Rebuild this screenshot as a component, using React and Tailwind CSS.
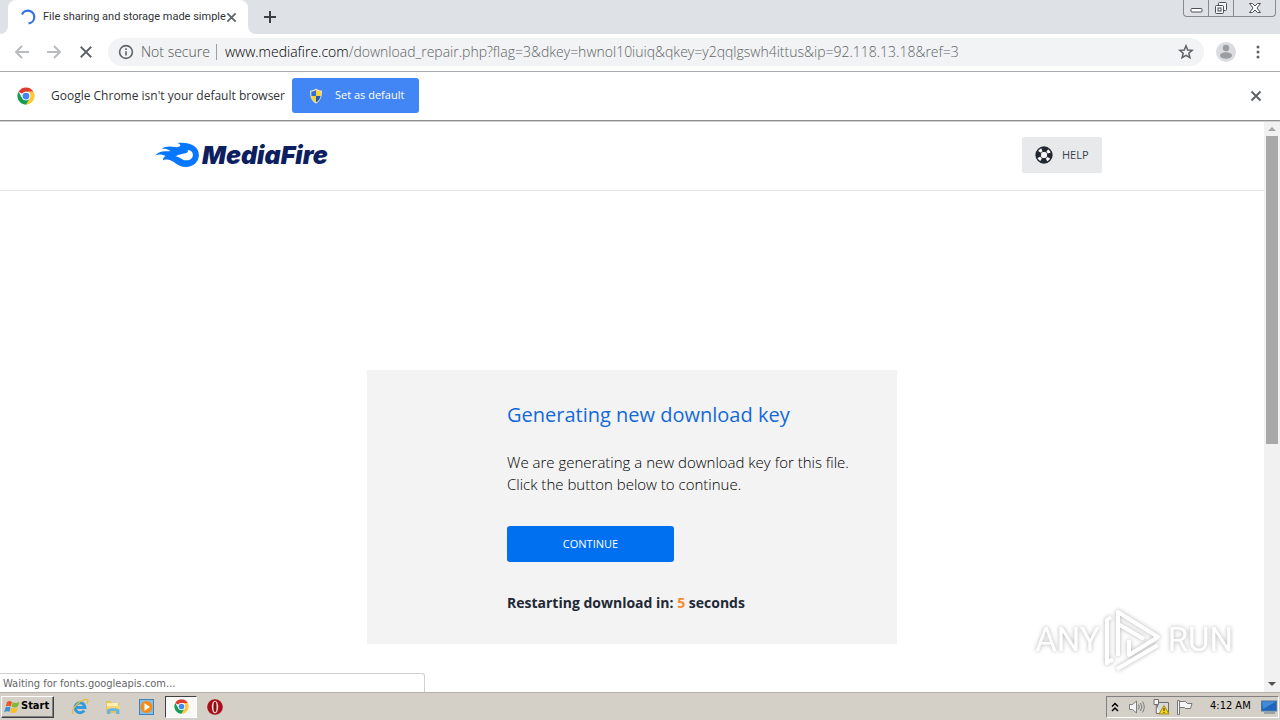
import React from "react";

function ChromeLogo({ className }) {
  return (
    <svg viewBox="0 0 48 48" className={className} aria-hidden="true">
      <circle cx="24" cy="24" r="23" fill="#fff" />
      <path d="M24 1 A23 23 0 0 1 43.9 12.5 H24 A11.5 11.5 0 0 0 14 18.3 L4.1 12.5 A23 23 0 0 1 24 1Z" fill="#dd3b2b" />
      <path d="M43.9 12.5 A23 23 0 0 1 24 47 L34 29.8 A11.5 11.5 0 0 0 34 18.2 L30 12.5Z" fill="#fcc934" />
      <path d="M4.1 12.5 A23 23 0 0 0 24 47 L34 29.8 A11.5 11.5 0 0 1 14 29.8Z" fill="#189b53" />
      <circle cx="24" cy="24" r="11.5" fill="#fff" />
      <circle cx="24" cy="24" r="9" fill="#4285f4" />
    </svg>
  );
}

function Cross({ className, width = 2 }) {
  return (
    <svg viewBox="0 0 12 12" className={className} fill="none" stroke="currentColor" strokeWidth={width} aria-hidden="true">
      <path d="M1.5 1.5 10.5 10.5 M10.5 1.5 1.5 10.5" />
    </svg>
  );
}

function TabStrip() {
  return (
    <div className="flex h-[34px] items-start bg-[#dee1e6]">
      <div className="flex h-full self-end">
        <span className="flex w-2 items-end bg-white">
          <span className="h-full w-full rounded-br-lg bg-[#dee1e6]" />
        </span>
        <div className="flex w-60 items-center rounded-t-lg bg-white pr-[10px] pl-3">
          <svg viewBox="0 0 16 16" className="h-4 w-4 shrink-0" fill="none" stroke="#3574e0" strokeWidth="2.200" aria-hidden="true">
            <path d="M2 5.500A6.400 6.400 0 1 1 8.500 14.400" />
          </svg>
          <span className="ml-[7px] flex-1 whitespace-nowrap font-['Roboto','Liberation_Sans',sans-serif] text-[11px] text-[#303336]">
            File sharing and storage made simple
          </span>
          <button type="button" aria-label="Close tab" className="mr-px text-[#5f6368]">
            <Cross className="h-[11px] w-[11px]" />
          </button>
        </div>
        <span className="flex w-2 items-end bg-white">
          <span className="h-full w-full rounded-bl-lg bg-[#dee1e6]" />
        </span>
      </div>
      <button type="button" aria-label="New tab" className="mt-[11px] ml-2 text-[#3c4043]">
        <svg viewBox="0 0 12 12" className="h-3 w-3" stroke="currentColor" strokeWidth="2" aria-hidden="true">
          <path d="M6 0V12M0 6H12" />
        </svg>
      </button>
      <div className="mr-1 ml-auto flex h-[17px] rounded-b-[4px] border border-t-0 border-[#858a93] text-[#4c5058]">
        <button type="button" aria-label="Minimize" className="flex w-[25px] items-center justify-center border-r border-[#858a93]">
          <svg viewBox="0 0 13 14" className="h-[14px] w-[13px]" fill="#fff" stroke="currentColor" aria-hidden="true">
            <rect x="1" y="7.500" width="11" height="3.500" rx="1" />
          </svg>
        </button>
        <button type="button" aria-label="Restore" className="flex w-[25px] items-center justify-center border-r border-[#858a93]">
          <svg viewBox="0 0 14 14" className="h-[14px] w-[14px]" fill="#f4f6f8" stroke="currentColor" aria-hidden="true">
            <rect x="4.500" y="1.500" width="8" height="8" rx="1" />
            <rect x="1.500" y="4.500" width="8" height="8" rx="1" />
            <rect x="4" y="7" width="3" height="3" />
          </svg>
        </button>
        <button type="button" aria-label="Close" className="flex w-[41px] items-center justify-center">
          <svg viewBox="0 0 14 12" className="h-3 w-[14px]" fill="#fff" stroke="currentColor" aria-hidden="true">
            <path d="M1.500 1.500H4.500L7 4 9.500 1.500H12.500L9 6 12.500 10.500H9.500L7 8 4.500 10.500H1.500L5 6Z" />
          </svg>
        </button>
      </div>
    </div>
  );
}

function Toolbar() {
  return (
    <div className="flex h-[38px] items-center border-b border-[#a9abae] bg-white pb-px pl-[14px]">
      <div className="flex gap-4">
        <button type="button" aria-label="Back" className="text-[#b9bbbe]">
          <svg viewBox="0 0 16 16" className="h-4 w-4" fill="none" stroke="currentColor" strokeWidth="2" aria-hidden="true">
            <path d="M15 8H2.500M8 2 2 8 8 14" />
          </svg>
        </button>
        <button type="button" aria-label="Forward" className="text-[#b9bbbe]">
          <svg viewBox="0 0 16 16" className="h-4 w-4" fill="none" stroke="currentColor" strokeWidth="2" aria-hidden="true">
            <path d="M1 8H13.500M8 2 14 8 8 14" />
          </svg>
        </button>
        <button type="button" aria-label="Stop loading" className="flex h-4 w-4 items-center justify-center text-[#5f6368]">
          <Cross className="h-[14px] w-[14px]" width={1.6} />
        </button>
      </div>
      <div className="ml-[14px] flex h-7 min-w-0 flex-1 items-center rounded-full bg-[#f1f3f4] pr-[10px] pl-[10px] text-sm font-light">
        <svg viewBox="0 0 16 16" className="h-4 w-4 shrink-0" fill="none" stroke="#5f6368" strokeWidth="1.600" aria-hidden="true">
          <circle cx="8" cy="8" r="6.400" />
          <path d="M8 7.200V11.600M8 4.300V6" />
        </svg>
        <span className="ml-[7px] whitespace-nowrap text-[#505357]">Not secure</span>
        <span className="mr-2 ml-[6px] h-4 w-px shrink-0 bg-[#9aa0a6]" />
        <a href="#address" className="min-w-0 flex-1 overflow-hidden whitespace-nowrap text-[#5f6367]">
          <span className="text-[#000000]">www.mediafire.com</span>
          /download_repair.php?flag=3&amp;dkey=hwnol10iuiq&amp;qkey=y2qqlgswh4ittus&amp;ip=92.118.13.18&amp;ref=3
        </a>
        <button type="button" aria-label="Bookmark this page" className="text-[#5f6368]">
          <svg viewBox="0 0 16 16" className="h-4 w-4" fill="none" stroke="currentColor" strokeWidth="1.500" aria-hidden="true">
            <path d="M8 1.800 9.700 6 14.200 6.300 10.800 9.200 11.900 13.700 8 11.300 4.100 13.700 5.200 9.200 1.800 6.300 6.300 6Z" />
          </svg>
        </button>
      </div>
      <button type="button" aria-label="Profile" className="mr-[14px] ml-3">
        <svg viewBox="0 0 20 20" className="h-5 w-5" aria-hidden="true">
          <circle cx="10" cy="10" r="10" fill="#dadcdf" />
          <circle cx="10" cy="6" r="3.200" fill="#9a9da1" />
          <ellipse cx="10" cy="13.500" rx="6" ry="3.300" fill="#9a9da1" />
        </svg>
      </button>
      <button type="button" aria-label="Menu" className="mr-[14px] text-[#5f6368]">
        <svg viewBox="0 0 16 16" className="h-4 w-4" fill="currentColor" aria-hidden="true">
          <circle cx="8" cy="3" r="1.500" />
          <circle cx="8" cy="8" r="1.500" />
          <circle cx="8" cy="13" r="1.500" />
        </svg>
      </button>
    </div>
  );
}

function InfoBar() {
  return (
    <div className="flex h-[49px] items-center border-b border-[#8f8f8f] bg-white pr-[18px] pb-px pl-[17px]">
      <ChromeLogo className="h-[18px] w-[18px]" />
      <span className="ml-4 w-[229px] whitespace-nowrap text-xs text-[#303336]">
        Google Chrome isn't your default browser
      </span>
      <button type="button" className="ml-3 flex h-[35px] w-[127px] items-center rounded-[3px] bg-[#4285f4] pl-4 text-[11px] text-white">
        <svg viewBox="0 0 16 16" className="mr-[11px] h-4 w-4" aria-hidden="true">
          <path d="M8 .5C10 2 12 2.500 14 2.500 14.300 9 12 13.500 8 15.500 4 13.500 1.700 9 2 2.500 4 2.500 6 2 8 .5Z" fill="#e8dfc0" />
          <path d="M8 2C6.500 3 5 3.500 3.300 3.600L3.400 8H8Z" fill="#2f6fd0" />
          <path d="M8 2C9.500 3 11 3.500 12.700 3.600L12.600 8H8Z" fill="#fcd22f" />
          <path d="M3.400 8H8V14.200C5.500 13 3.900 11 3.400 8Z" fill="#fcd22f" />
          <path d="M12.600 8H8V14.200C10.500 13 12.100 11 12.600 8Z" fill="#2459b4" />
        </svg>
        Set as default
      </button>
      <button type="button" aria-label="Dismiss" className="ml-auto text-[#5f6368]">
        <Cross className="h-3 w-3" />
      </button>
    </div>
  );
}

function MediaFireLogo() {
  return (
    <a href="#home" aria-label="MediaFire" className="flex items-center gap-[3px]">
      <svg viewBox="0 0 44 26" className="h-[26px] w-11" aria-hidden="true">
        <path
          fillRule="evenodd"
          fill="#0877ff"
          d="M0 13.500C3 10.500 6 9.300 10 9.300 12.500 9.400 14 9.400 15.500 9 12.500 7 9.500 6.600 6.500 7 10 4 15 4.200 20 5 22 5.400 24.500 5 25.500 3.500 25 2 23.500 1.200 22 1 33 -.5 43.800 3 43.900 13 43.900 20 38 25 31 25 22 25 19 18 12.500 17.500 10.500 17.400 9 17.500 8 18.500 7.800 16.500 9 15 10.500 14 7 12 3 12 0 13.500ZM20.500 14.200C24 14.300 26.500 18.300 31.500 18.300 35.500 18.200 38 15.800 37.900 12.500 37.800 9.600 35.500 8 32.500 7.900 33.300 8.900 33 10 31.800 10.700 28.500 12.300 25 11.500 20.500 14.200Z"
        />
      </svg>
      <span className="font-['Inter','Liberation_Sans',sans-serif] text-[25px] leading-7 font-black text-[#0c2060] italic">
        MediaFire
      </span>
    </a>
  );
}

function SiteHeader() {
  return (
    <header className="border-b border-[#e3e3e5]">
      <div className="mx-auto flex h-[68px] max-w-[960px] items-center justify-between pr-[10px] pb-[2px] pl-[3px]">
        <MediaFireLogo />
        <button type="button" className="flex h-9 w-20 items-center rounded-[2px] bg-[#e8e9ea] pl-[13px] text-[11px] text-[#3a424d]">
          <svg viewBox="0 0 18 18" className="mr-[9px] h-[18px] w-[18px]" fill="none" aria-hidden="true">
            <circle cx="9" cy="9" r="5.700" stroke="#fff" strokeWidth="4.500" />
            <circle cx="9" cy="9" r="5.700" stroke="#222831" strokeWidth="4.500" strokeDasharray="5.800 3.153" strokeDashoffset="2.900" />
            <circle cx="9" cy="9" r="7.900" stroke="#222831" strokeWidth="1.500" />
            <circle cx="9" cy="9" r="3.600" stroke="#222831" strokeWidth="1" />
            <circle cx="9" cy="9" r="3" fill="#f5f5f5" />
          </svg>
          HELP
        </button>
      </div>
    </header>
  );
}

function DownloadCard() {
  return (
    <section className="mx-auto mt-[179px] flex w-full max-w-[530px] flex-col items-start bg-[#f3f3f3] pt-[30px] pb-[30px] pl-[140px]">
      <h1 className="text-xl leading-[30px] text-[#1469d8]">Generating new download key</h1>
      <p className="mt-[21px] text-[15px] leading-[22px] font-light whitespace-nowrap text-[#000000]">
        We are generating a new download key for this file.
        <br />
        Click the button below to continue.
      </p>
      <button type="button" className="mt-[31px] h-9 w-[167px] rounded-[3px] bg-[#0070f0] text-[11px] text-white">
        CONTINUE
      </button>
      <p className="mt-[30px] text-sm leading-[22px] font-bold text-[#222835]">
        Restarting download in: <span className="text-[#f68b2f]">5</span> seconds
      </p>
    </section>
  );
}

function ScrollBar() {
  return (
    <div className="flex w-4 shrink-0 flex-col items-center bg-[#f1f1f1]" aria-hidden="true">
      <span className="flex h-[14px] items-center">
        <svg viewBox="0 0 8 4" className="h-1 w-2" fill="#a3a3a3"><path d="M0 4 4 0 8 4Z" /></svg>
      </span>
      <span className="h-[308px] w-3 bg-[#a8a8a8]" />
      <span className="mt-auto flex h-[17px] items-center">
        <svg viewBox="0 0 8 4" className="h-1 w-2" fill="#505050"><path d="M0 0 4 4 8 0Z" /></svg>
      </span>
    </div>
  );
}

function AnyRunMark() {
  return (
    <div className="absolute right-[47px] bottom-5 flex items-center font-['Roboto','Liberation_Sans',sans-serif] text-[33px] leading-[60px] text-white drop-shadow-[0_0_2px_#b0b0b0]">
      <span>ANY</span>
      <svg viewBox="0 0 60 64" className="mr-[6px] ml-[2px] h-16 w-[60px]" fill="none" stroke="#fff" strokeWidth="4" strokeLinejoin="round" aria-hidden="true">
        <path d="M16 48V4L56 29 27 47V32M16 16 42 31M9 9 5 12V55L11 51M15 61 56 37" />
      </svg>
      <span>RUN</span>
    </div>
  );
}

function Taskbar() {
  return (
    <footer className="flex h-7 items-center border-t border-[#b5b1aa] bg-[#d4d0c8] pl-px text-[11px] text-black">
      <button type="button" className="flex h-[22px] w-[53px] items-center gap-px border border-t-white border-r-[#404040] border-b-[#404040] border-l-white pl-[2px] font-bold shadow-[inset_-1px_-1px_0_#808080]">
        <svg viewBox="0 0 16 16" className="h-4 w-4 shrink-0" aria-hidden="true">
          <path d="M3 3C5 1.500 6.500 2 8 3L6.800 7.500C5 6.500 3.500 6.500 1.700 7.600Z" fill="#e9562a" />
          <path d="M8.800 3.300C11 4.500 13 4 15.300 2.700L14 7.500C12 8.700 10 8.800 7.600 7.700Z" fill="#83b735" />
          <path d="M1.500 8.500C3.500 7.400 5 7.500 6.600 8.400L5.400 12.800C4 11.800 2 12 .2 13.200Z" fill="#3e8ed8" />
          <path d="M7.400 8.700C9.500 9.800 11.500 9.600 13.800 8.400L12.500 13C10.500 14.300 8.400 14.300 6.200 13.200Z" fill="#f9bf24" />
        </svg>
        Start
      </button>
      <div className="ml-[17px] flex items-center">
        <button type="button" aria-label="Internet Explorer" className="flex w-[33px] justify-start">
          <svg viewBox="0 0 18 18" className="h-[18px] w-[18px]" fill="none" aria-hidden="true">
            <path d="M4.500 9.500H14A5 5 0 1 0 13.200 12.500" stroke="#3299dc" strokeWidth="3" />
            <path d="M2 16C-1 12 8 3 14 1.500 18 .8 17 4 15.800 6" stroke="#e6bd37" strokeWidth="1.300" />
          </svg>
        </button>
        <button type="button" aria-label="File Explorer" className="flex w-[34px] justify-start">
          <svg viewBox="0 0 18 18" className="h-[18px] w-[18px]" aria-hidden="true">
            <path d="M2 3H7L8 5H15V15H2Z" fill="#e6c35e" />
            <path d="M3 5H14V8H3Z" fill="#f9efb5" />
            <path d="M3 8H16V12H3Z" fill="#f2d878" />
            <path d="M3 16V12C3 9.500 15.500 9.500 15.500 12V16H12V13H6.500V16Z" fill="#68b5df" />
          </svg>
        </button>
        <button type="button" aria-label="Media Player" className="flex w-[27px] justify-start">
          <svg viewBox="0 0 18 18" className="h-[18px] w-[18px]" aria-hidden="true">
            <rect x="1.500" y="1.500" width="14" height="15" fill="#8abbe3" stroke="#3e83bc" />
            <circle cx="8.500" cy="9" r="6" fill="#f28c1c" />
            <path d="M6.500 5.300 12 9 6.500 12.700Z" fill="#fff" />
          </svg>
        </button>
        <button type="button" aria-label="Google Chrome" className="flex h-[22px] w-8 items-center justify-center border border-t-[#404040] border-r-white border-b-white border-l-[#404040] bg-[#f8f8f7]">
          <ChromeLogo className="h-[15px] w-[15px]" />
        </button>
        <button type="button" aria-label="Opera" className="ml-[9px]">
          <svg viewBox="0 0 18 18" className="h-[18px] w-[18px]" aria-hidden="true">
            <circle cx="9" cy="9" r="7.800" fill="#a90d16" />
            <ellipse cx="9" cy="9" rx="3.200" ry="6.300" fill="#e9d4d4" />
            <ellipse cx="9" cy="9" rx="1.500" ry="5.200" fill="#8d0b12" />
          </svg>
        </button>
      </div>
      <div className="mr-px ml-auto flex h-[22px] w-[173px] items-center border border-t-[#808080] border-r-white border-b-white border-l-[#808080] pl-1">
        <button type="button" aria-label="Show hidden icons">
          <svg viewBox="0 0 8 12" className="h-3 w-2" fill="none" stroke="#000" strokeWidth="1.500" aria-hidden="true">
            <path d="M1 5.500 4 2.500 7 5.500M1 10 4 7 7 10" />
          </svg>
        </button>
        <svg viewBox="0 0 18 16" className="ml-[9px] h-4 w-[18px]" fill="none" stroke="#7c7c7c" aria-hidden="true">
          <path d="M1.500 5.500H4.500L8.500 2V14L4.500 10.500H1.500Z" fill="#f4f4f4" />
          <path d="M10.500 5.500Q12 8 10.500 10.500M12.500 4Q15 8 12.500 12M14.500 2.500Q18 8 14.500 13.500" />
        </svg>
        <svg viewBox="0 0 18 18" className="ml-[6px] h-[18px] w-[18px]" aria-hidden="true">
          <path d="M5.500 4.500H16.500V14.500H5.500Z" fill="#d8d8d8" stroke="#6e6e6e" />
          <path d="M2 1.500V6.500H6.500V1.500ZM4.250 6.500V15.500H8" fill="#f4f4f4" stroke="#6e6e6e" />
          <path d="M12 7.500 17 16H7Z" fill="#f8d60f" stroke="#a48c12" />
          <path d="M12 10V13M12 14V15" stroke="#222" />
        </svg>
        <svg viewBox="0 0 18 16" className="ml-[6px] h-4 w-[18px]" fill="#f4f4f4" stroke="#777" aria-hidden="true">
          <path d="M3.500 2.500H9.500L11.500 4.500H16L14.500 9.500H9.500L8.500 8.500H3.500Z" />
          <path d="M1.500 1.500H3.500V15.500H1.500Z" />
        </svg>
        <span className="ml-4 whitespace-nowrap">4:12 AM</span>
        <svg viewBox="0 0 16 14" className="mr-px ml-auto h-[14px] w-4" aria-hidden="true">
          <rect x=".5" y="1" width="15" height="10" fill="#1e66bd" stroke="#50779e" />
          <path d="M1 1.500H15L2 9Z" fill="#3f8bd5" />
          <path d="M3 13H14" stroke="#8d9297" strokeWidth="1.500" />
        </svg>
      </div>
    </footer>
  );
}

export default function App() {
  return (
    <div className="flex min-h-screen flex-col bg-white font-['Open_Sans','Liberation_Sans',sans-serif] text-[#3c4043]">
      <TabStrip />
      <Toolbar />
      <InfoBar />
      <div className="relative flex flex-1 border-t border-[#d2d2d2]">
        <main className="min-w-0 flex-1 pb-12">
          <SiteHeader />
          <DownloadCard />
        </main>
        <ScrollBar />
        <div className="absolute bottom-0 left-0 h-[19px] w-[425px] rounded-tr-[3px] border-t border-r border-[#d0d0d0] bg-white pl-[3px] font-['DejaVu_Sans_Condensed','DejaVu_Sans',sans-serif] text-[11px] leading-[19px] text-[#666666]">
          Waiting for fonts.googleapis.com...
        </div>
        <AnyRunMark />
      </div>
      <div className="font-['DejaVu_Sans_Condensed','DejaVu_Sans',sans-serif]">
        <Taskbar />
      </div>
    </div>
  );
}
